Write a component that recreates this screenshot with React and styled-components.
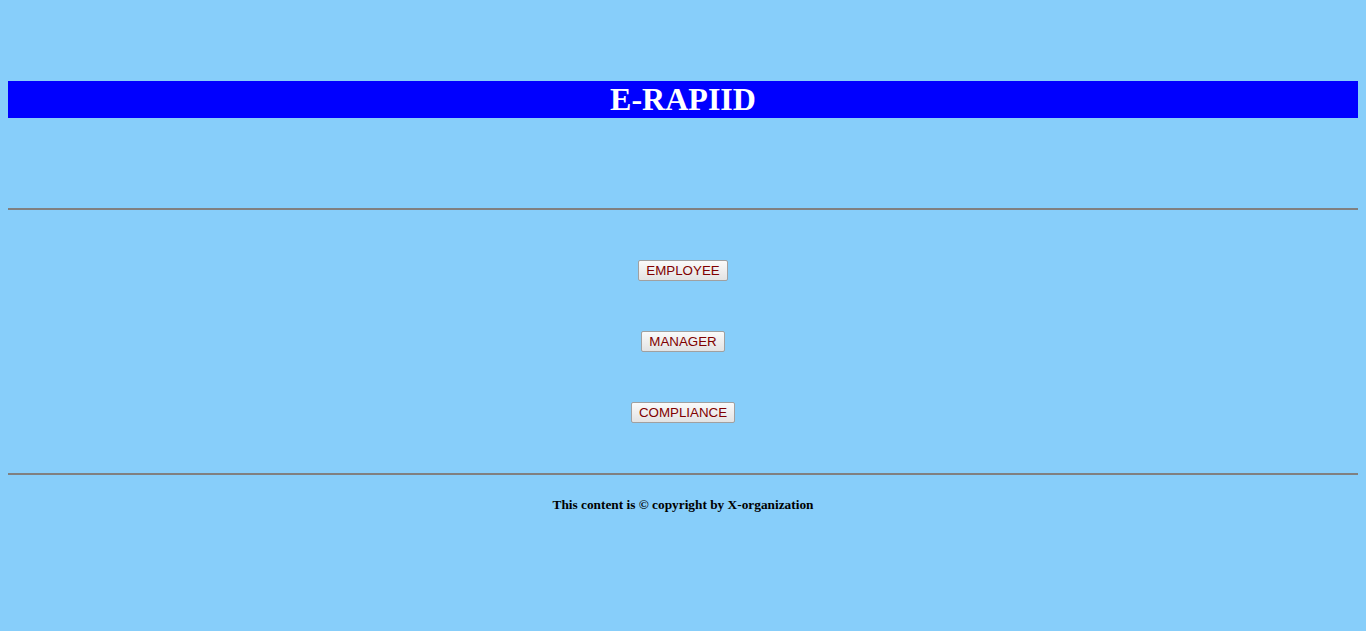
import React from "react";
import styled, { createGlobalStyle } from "styled-components";

const Global = createGlobalStyle`
  html, body { background: #87cefa; }
  body { margin: 8px; font-family: "Liberation Serif", "Times New Roman", serif; }
`;

const Page = styled.div`
  padding-top: 73px;
  display: flex;
  flex-direction: column;
  min-height: 550px;
`;

const Banner = styled.h1`
  margin: 0;
  background: #0000ff;
  color: #ffffff;
  text-align: center;
  font-family: "Liberation Serif", "Times New Roman", serif;
  font-weight: bold;
  font-size: 32px;
  line-height: 37px;
  height: 37px;
`;

const Rule = styled.hr`
  margin: ${(p) => p.$top}px 0 0 0;
  border: none;
  border-top: 2px solid #808080;
  height: 0;
`;

const ButtonList = styled.div`
  display: flex;
  flex-direction: column;
  align-items: center;
  gap: 50px;
  padding: 50px 0;
`;

const RoleButton = styled.button`
  font-family: "Liberation Sans", Arial, sans-serif;
  font-size: 13.33px;
  line-height: 17px;
  height: 21px;
  padding: 1px 7px;
  color: #800000;
  background: linear-gradient(#fafafa, #e3e3e3);
  border: 1px solid #a0a0a0;
  border-radius: 2px;
  cursor: pointer;
`;

const Footer = styled.p`
  margin: 22px 0 0 0;
  text-align: center;
  font-weight: bold;
  font-size: 13.33px;
  line-height: 15px;
  color: #000;
`;

export default function App() {
  return (
    <>
      <Global />
      <Page>
        <Banner>E-RAPIID</Banner>
        <Rule $top={90} />
        <ButtonList>
          <RoleButton>EMPLOYEE</RoleButton>
          <RoleButton>MANAGER</RoleButton>
          <RoleButton>COMPLIANCE</RoleButton>
        </ButtonList>
        <Rule $top={0} />
        <Footer>This content is © copyright by X-organization</Footer>
      </Page>
    </>
  );
}
